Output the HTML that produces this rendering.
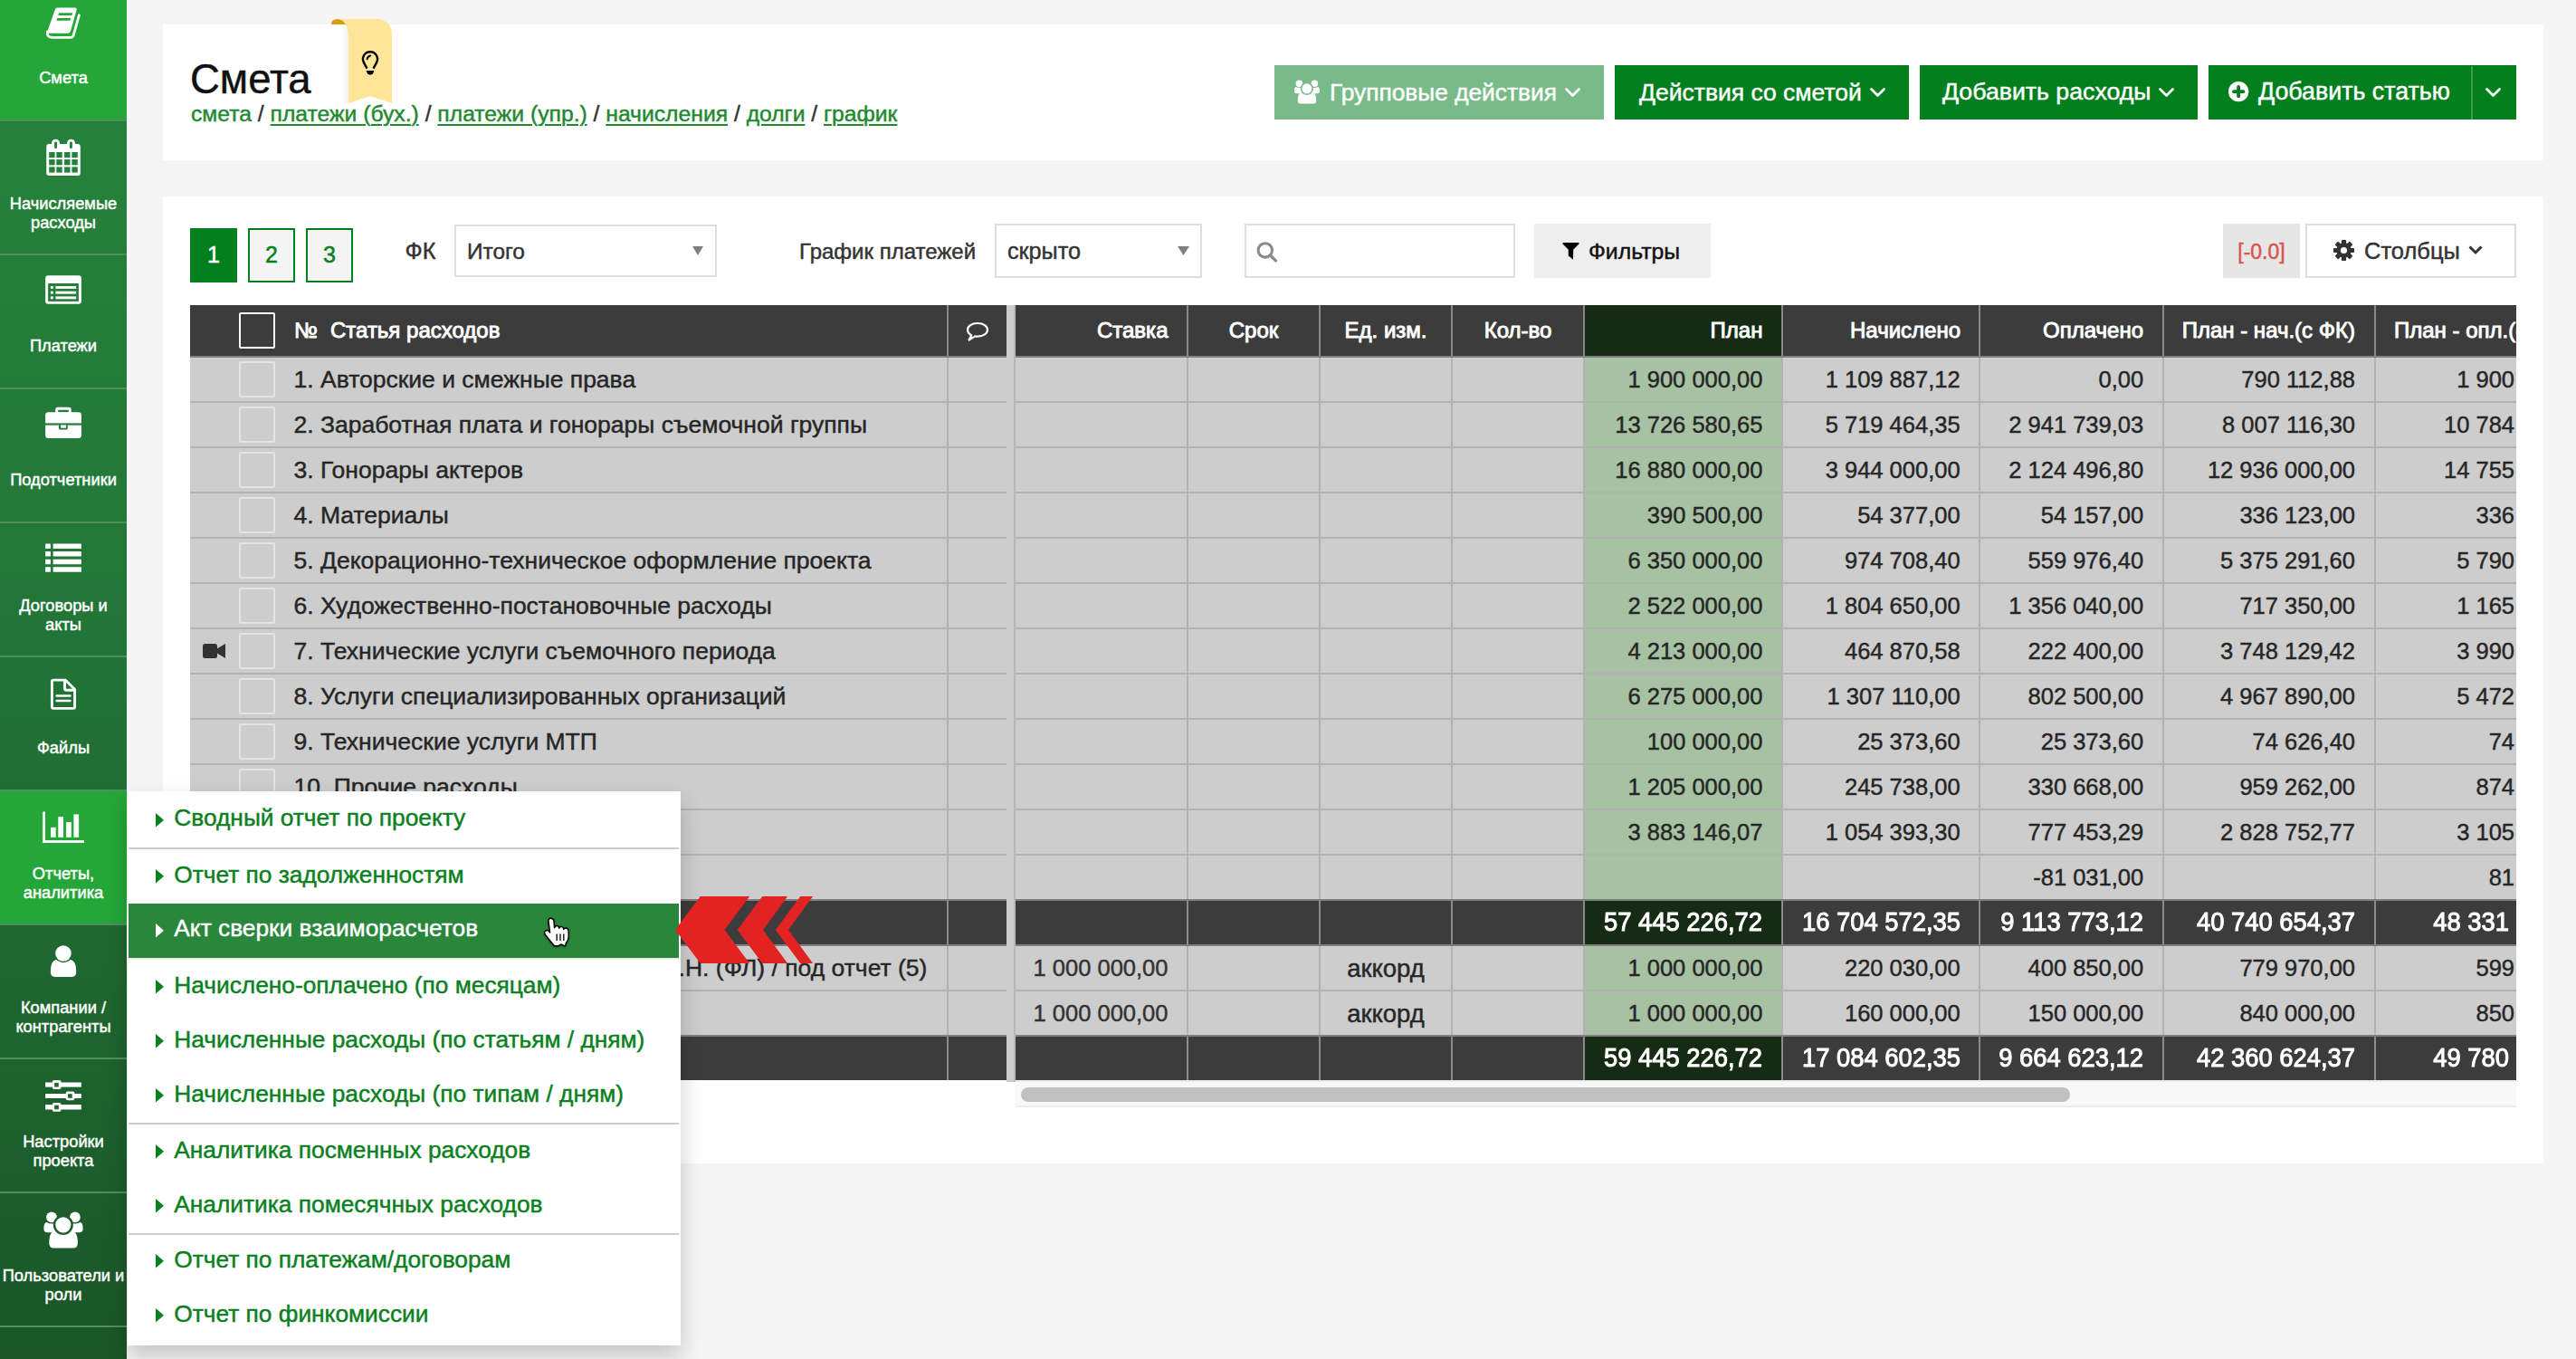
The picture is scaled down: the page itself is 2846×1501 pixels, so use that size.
<!DOCTYPE html><html><head><meta charset="utf-8"><style>
html,body{margin:0;padding:0;width:2846px;height:1501px;overflow:hidden;}
#root{position:relative;width:2846px;height:1501px;overflow:hidden;background:#f5f5f5;}
body{width:2846px;height:1501px;overflow:hidden;position:relative;background:#f5f5f5;font-family:"Liberation Sans", sans-serif;}
.t{position:absolute;white-space:nowrap;-webkit-text-stroke-width:0.45px;}
.r{position:absolute;}
svg{position:absolute;overflow:visible;}
</style></head><body><div id="root">
<div class="r" style="left:0px;top:0px;width:140px;height:1501px;background:linear-gradient(#26843b 0px, #237838 600px, #1f6a31 1000px, #1a5628 1501px);"></div>
<div class="r" style="left:0px;top:0px;width:140px;height:132px;background:#24a738;"></div>
<div class="r" style="left:0px;top:132px;width:140px;height:2px;background:#4e905d;"></div>
<div class="r" style="left:0px;top:280px;width:140px;height:2px;background:#4e905d;"></div>
<div class="r" style="left:0px;top:428px;width:140px;height:2px;background:#4e905d;"></div>
<div class="r" style="left:0px;top:576px;width:140px;height:2px;background:#4e905d;"></div>
<div class="r" style="left:0px;top:724px;width:140px;height:2px;background:#4e905d;"></div>
<div class="r" style="left:0px;top:872px;width:140px;height:2px;background:#4e905d;"></div>
<div class="r" style="left:0px;top:874px;width:140px;height:146px;background:#24a738;"></div>
<div class="r" style="left:0px;top:1020px;width:140px;height:2px;background:#4e905d;"></div>
<div class="r" style="left:0px;top:1168px;width:140px;height:2px;background:#4e905d;"></div>
<div class="r" style="left:0px;top:1316px;width:140px;height:2px;background:#4e905d;"></div>
<div class="r" style="left:0px;top:1464px;width:140px;height:2px;background:#4e905d;"></div>
<div class="t" style="left:-530.0px;width:1200px;text-align:center;top:76.5px;font-size:18.3px;line-height:18.3px;color:#fff;font-weight:400;">Смета</div>
<div class="t" style="left:-530.0px;width:1200px;text-align:center;top:215.5px;font-size:18.3px;line-height:18.3px;color:#fff;font-weight:400;">Начисляемые</div>
<div class="t" style="left:-530.0px;width:1200px;text-align:center;top:236.5px;font-size:18.3px;line-height:18.3px;color:#fff;font-weight:400;">расходы</div>
<div class="t" style="left:-530.0px;width:1200px;text-align:center;top:372.5px;font-size:18.3px;line-height:18.3px;color:#fff;font-weight:400;">Платежи</div>
<div class="t" style="left:-530.0px;width:1200px;text-align:center;top:520.5px;font-size:18.3px;line-height:18.3px;color:#fff;font-weight:400;">Подотчетники</div>
<div class="t" style="left:-530.0px;width:1200px;text-align:center;top:659.5px;font-size:18.3px;line-height:18.3px;color:#fff;font-weight:400;">Договоры и</div>
<div class="t" style="left:-530.0px;width:1200px;text-align:center;top:680.5px;font-size:18.3px;line-height:18.3px;color:#fff;font-weight:400;">акты</div>
<div class="t" style="left:-530.0px;width:1200px;text-align:center;top:816.5px;font-size:18.3px;line-height:18.3px;color:#fff;font-weight:400;">Файлы</div>
<div class="t" style="left:-530.0px;width:1200px;text-align:center;top:955.5px;font-size:18.3px;line-height:18.3px;color:#fff;font-weight:400;">Отчеты,</div>
<div class="t" style="left:-530.0px;width:1200px;text-align:center;top:976.5px;font-size:18.3px;line-height:18.3px;color:#fff;font-weight:400;">аналитика</div>
<div class="t" style="left:-530.0px;width:1200px;text-align:center;top:1103.5px;font-size:18.3px;line-height:18.3px;color:#fff;font-weight:400;">Компании /</div>
<div class="t" style="left:-530.0px;width:1200px;text-align:center;top:1124.5px;font-size:18.3px;line-height:18.3px;color:#fff;font-weight:400;">контрагенты</div>
<div class="t" style="left:-530.0px;width:1200px;text-align:center;top:1251.5px;font-size:18.3px;line-height:18.3px;color:#fff;font-weight:400;">Настройки</div>
<div class="t" style="left:-530.0px;width:1200px;text-align:center;top:1272.5px;font-size:18.3px;line-height:18.3px;color:#fff;font-weight:400;">проекта</div>
<div class="t" style="left:-530.0px;width:1200px;text-align:center;top:1399.5px;font-size:18.3px;line-height:18.3px;color:#fff;font-weight:400;">Пользователи и</div>
<div class="t" style="left:-530.0px;width:1200px;text-align:center;top:1420.5px;font-size:18.3px;line-height:18.3px;color:#fff;font-weight:400;">роли</div>
<svg style="left:0;top:0" width="140" height="1501" viewBox="0 0 140 1501"><g transform="translate(45,0)">
<path d="M18.2,8.6 L37.8,8.6 Q40.2,8.6 39.6,11 L33,34.6 Q32.4,36.8 30.2,36.8 L9.2,36.8 Q6.8,36.8 7.4,34.4 L15.8,10.6 Q16.4,8.6 18.2,8.6 Z" fill="#fff"/>
<polygon points="20.2,14.2 35.2,14.2 34.4,16.9 19.4,16.9" fill="#24a738"/>
<polygon points="18.2,20 33.2,20 32.4,22.8 17.4,22.8" fill="#24a738"/>
<path d="M7.4,35 Q6.2,41.2 12.4,41.3 L33,41.3 Q35.6,41.3 36.3,38.6 L42.4,16.8" fill="none" stroke="#fff" stroke-width="2.8" stroke-linecap="round"/>
</g>
<g transform="translate(45,150)">
<rect x="6.25" y="9" width="37.55" height="35" rx="3" fill="#fff"/>
<rect x="12" y="3.7" width="9" height="12" rx="4.5" fill="#fff"/>
<rect x="29" y="3.7" width="9" height="12" rx="4.5" fill="#fff"/>
<rect x="15.1" y="6.6" width="2.9" height="7.6" rx="1.4" fill="#25803a"/>
<rect x="32" y="6.6" width="2.9" height="7.6" rx="1.4" fill="#25803a"/>
<rect x="9.2" y="18" width="6.4" height="6.2" fill="#25803a"/><rect x="9.2" y="26.1" width="6.4" height="6.2" fill="#25803a"/><rect x="9.2" y="34.4" width="6.4" height="6.2" fill="#25803a"/><rect x="17.3" y="18" width="6.4" height="6.2" fill="#25803a"/><rect x="17.3" y="26.1" width="6.4" height="6.2" fill="#25803a"/><rect x="17.3" y="34.4" width="6.4" height="6.2" fill="#25803a"/><rect x="26.1" y="18" width="6.4" height="6.2" fill="#25803a"/><rect x="26.1" y="26.1" width="6.4" height="6.2" fill="#25803a"/><rect x="26.1" y="34.4" width="6.4" height="6.2" fill="#25803a"/><rect x="34.4" y="18" width="6.4" height="6.2" fill="#25803a"/><rect x="34.4" y="26.1" width="6.4" height="6.2" fill="#25803a"/><rect x="34.4" y="34.4" width="6.4" height="6.2" fill="#25803a"/></g>
<g transform="translate(45,295)">
<rect x="5.15" y="9.2" width="39.75" height="31.6" rx="3.2" fill="#fff"/>
<rect x="8.1" y="18" width="33.8" height="19.9" fill="#247e39"/>
<rect x="10.9" y="21" width="2.9" height="2.9" fill="#fff"/><rect x="16.4" y="21" width="22.8" height="2.9" fill="#fff"/><rect x="10.9" y="26.7" width="2.9" height="2.9" fill="#fff"/><rect x="16.4" y="26.7" width="22.8" height="2.9" fill="#fff"/><rect x="10.9" y="32.4" width="2.9" height="2.9" fill="#fff"/><rect x="16.4" y="32.4" width="22.8" height="2.9" fill="#fff"/></g>
<g transform="translate(45,442)">
<rect x="16.2" y="7.7" width="17.5" height="8" rx="2.5" fill="#fff"/>
<rect x="19.1" y="10.7" width="11.8" height="2.7" rx="0.8" fill="#247b38"/>
<rect x="5.15" y="13.2" width="39.75" height="28.7" rx="3.2" fill="#fff"/>
<rect x="5" y="25.4" width="40" height="2.2" fill="#247b38"/>
<rect x="20" y="26.5" width="9.8" height="6.1" rx="1.5" fill="#247b38"/>
<rect x="22" y="27.4" width="6" height="3.3" fill="#fff"/>
</g>
<g transform="translate(45,592)"><rect x="5.15" y="8.6" width="5.75" height="5.5" rx="0.5" fill="#fff"/><rect x="13.6" y="8.6" width="31.3" height="5.5" rx="0.5" fill="#fff"/><rect x="5.15" y="17.1" width="5.75" height="5.5" rx="0.5" fill="#fff"/><rect x="13.6" y="17.1" width="31.3" height="5.5" rx="0.5" fill="#fff"/><rect x="5.15" y="25.8" width="5.75" height="5.5" rx="0.5" fill="#fff"/><rect x="13.6" y="25.8" width="31.3" height="5.5" rx="0.5" fill="#fff"/><rect x="5.15" y="34.2" width="5.75" height="5.5" rx="0.5" fill="#fff"/><rect x="13.6" y="34.2" width="31.3" height="5.5" rx="0.5" fill="#fff"/></g>
<g transform="translate(45,742)">
<path d="M27.2,9.1 L14,9.1 Q12.4,9.1 12.4,10.7 L12.4,38.8 Q12.4,40.4 14,40.4 L36,40.4 Q37.6,40.4 37.6,38.8 L37.6,19.6 Z" fill="none" stroke="#fff" stroke-width="2.9" stroke-linejoin="round"/>
<path d="M26.5,9.1 L26.5,18.6 Q26.5,20.2 28.1,20.2 L37.6,20.2" fill="none" stroke="#fff" stroke-width="2.9"/>
<line x1="17.7" y1="26.5" x2="32.4" y2="26.5" stroke="#fff" stroke-width="2.6" stroke-linecap="round"/>
<line x1="17.7" y1="32" x2="32.4" y2="32" stroke="#fff" stroke-width="2.6" stroke-linecap="round"/>
</g>
<g transform="translate(42,888)">
<rect x="5.15" y="8.5" width="2.75" height="34.4" fill="#fff"/>
<rect x="5.15" y="40.1" width="45.85" height="2.8" fill="#fff"/>
<rect x="14" y="25.8" width="5.7" height="11" fill="#fff"/>
<rect x="22.3" y="14.2" width="5.7" height="22.6" fill="#fff"/>
<rect x="31.1" y="20" width="5.7" height="16.8" fill="#fff"/>
<rect x="39.4" y="11.4" width="5.7" height="25.4" fill="#fff"/>
</g>
<g transform="translate(45,1036)">
<path d="M10.9,37.5 Q10.9,24 18,23.9 Q21.5,26.8 24.95,26.8 Q28.5,26.8 32,23.9 Q39.2,24 39.2,37.5 Q39.2,42.9 34.5,42.9 L15.6,42.9 Q10.9,42.9 10.9,37.5 Z" fill="#fff"/>
<circle cx="24.95" cy="17.05" r="10.2" fill="#206a31"/>
<circle cx="24.95" cy="17.05" r="8.75" fill="#fff"/>
</g>
<g transform="translate(44,1185)"><rect x="6.1" y="10.5" width="39.7" height="5.1" fill="#fff"/><rect x="13.8" y="8.1" width="9.7" height="9.9" rx="2" fill="#fff"/><rect x="16.2" y="10.9" width="4.6" height="4.6" fill="#1f652f"/><rect x="6.1" y="23" width="39.7" height="5" fill="#fff"/><rect x="28.7" y="20.4" width="9.7" height="9.9" rx="2" fill="#fff"/><rect x="31.1" y="23.2" width="4.6" height="4.6" fill="#1f652f"/><rect x="6.1" y="35.1" width="39.7" height="5.399999999999999" fill="#fff"/><rect x="13.8" y="32.9" width="9.7" height="9.9" rx="2" fill="#fff"/><rect x="16.2" y="35.7" width="4.6" height="4.6" fill="#1f652f"/></g>
<g transform="translate(44,1333)">
<circle cx="13" cy="11.4" r="5.9" fill="#fff"/>
<circle cx="38.9" cy="11.4" r="5.85" fill="#fff"/>
<path d="M4.4,24 Q4.4,16.9 7.5,16.9 Q10.5,18.6 13,18.6 Q15.5,18.6 18,17.5 L18,28.3 L8.4,28.3 Q4.4,28.3 4.4,24 Z" fill="#fff"/>
<path d="M47.6,24 Q47.6,16.9 44.5,16.9 Q41.5,18.6 38.9,18.6 Q36.4,18.6 34,17.5 L34,28.3 L43.6,28.3 Q47.6,28.3 47.6,24 Z" fill="#fff"/>
<circle cx="25.85" cy="19.9" r="10.2" fill="#1c5e2c"/>
<path d="M10.3,40 Q10.3,26.5 17.5,26.3 Q21.5,29.5 25.85,29.5 Q30.2,29.5 34.2,26.3 Q41.9,26.5 41.9,40 Q41.9,45.6 36.5,45.6 L15.7,45.6 Q10.3,45.6 10.3,40 Z" fill="#fff"/>
<circle cx="25.85" cy="19.9" r="10.2" fill="none" stroke="#1c5e2c" stroke-width="1.6"/>
<circle cx="25.85" cy="19.9" r="8.55" fill="#fff"/>
</g></svg>
<div class="r" style="left:180px;top:27px;width:2630px;height:150px;background:#fff;"></div>
<div class="t" style="left:210.0px;top:64.5px;font-size:45.5px;line-height:45.5px;color:#111;font-weight:400;">Смета</div>
<div class="t" style="left:211.0px;top:113.6px;font-size:24.7px;line-height:24.7px;color:#22892f;font-weight:400;"><span style="color:#22892f">смета</span><span style="color:#333"> / </span><span style="color:#22892f;text-decoration:underline;text-decoration-thickness:1.5px;text-underline-offset:3px;">платежи (бух.)</span><span style="color:#333"> / </span><span style="color:#22892f;text-decoration:underline;text-decoration-thickness:1.5px;text-underline-offset:3px;">платежи (упр.)</span><span style="color:#333"> / </span><span style="color:#22892f;text-decoration:underline;text-decoration-thickness:1.5px;text-underline-offset:3px;">начисления</span><span style="color:#333"> / </span><span style="color:#22892f;text-decoration:underline;text-decoration-thickness:1.5px;text-underline-offset:3px;">долги</span><span style="color:#333"> / </span><span style="color:#22892f;text-decoration:underline;text-decoration-thickness:1.5px;text-underline-offset:3px;">график</span></div>
<svg style="left:0;top:0" width="2846" height="200" viewBox="0 0 2846 200">
<path d="M366,27 C366,22.5 369.5,21 374,21 L378,21 C382,21 384,24 384,27 Z" fill="#dc9c12"/>
<rect x="377" y="27" width="8" height="87" fill="url(#ribsh)"/>
<defs><linearGradient id="ribsh" x1="0" x2="1" y1="0" y2="0"><stop offset="0" stop-color="#000" stop-opacity="0"/><stop offset="1" stop-color="#000" stop-opacity="0.05"/></linearGradient></defs>
<path d="M372,21 L417,21 A16,16 0 0 1 433,37 L433,114 L408.7,106.3 L385,114 L385,42 C385,30 381,21 372,21 Z" fill="#ffe597"/>
<path d="M405.5,75.6 L401.97,69.12 A8,8 0 1 1 416.03,69.12 L412.5,75.6" fill="none" stroke="#000" stroke-width="2.4"/>
<path d="M405.6,65.3 A4.6,4.6 0 0 1 409.3,61.5" fill="none" stroke="#000" stroke-width="1.9" stroke-linecap="round"/>
<path d="M404.9,78.1 L413.1,78.1 A4.1,4.6 0 0 1 404.9,78.1 Z" fill="#000"/>
</svg>
<div class="r" style="left:1408px;top:72px;width:364px;height:60px;background:#79bb88;"></div>
<svg style="left:0;top:0" width="2846" height="200" viewBox="0 0 2846 200"><g transform="translate(1427.04,84.9) scale(0.65)">
<circle cx="13" cy="11.4" r="5.9" fill="#fff"/>
<circle cx="38.9" cy="11.4" r="5.85" fill="#fff"/>
<path d="M4.4,24 Q4.4,16.9 7.5,16.9 Q10.5,18.6 13,18.6 Q15.5,18.6 18,17.5 L18,28.3 L8.4,28.3 Q4.4,28.3 4.4,24 Z" fill="#fff"/>
<path d="M47.6,24 Q47.6,16.9 44.5,16.9 Q41.5,18.6 38.9,18.6 Q36.4,18.6 34,17.5 L34,28.3 L43.6,28.3 Q47.6,28.3 47.6,24 Z" fill="#fff"/>
<circle cx="25.85" cy="19.9" r="10.2" fill="#79bb88"/>
<path d="M10.3,40 Q10.3,26.5 17.5,26.3 Q21.5,29.5 25.85,29.5 Q30.2,29.5 34.2,26.3 Q41.9,26.5 41.9,40 Q41.9,45.6 36.5,45.6 L15.7,45.6 Q10.3,45.6 10.3,40 Z" fill="#fff"/>
<circle cx="25.85" cy="19.9" r="10.2" fill="none" stroke="#79bb88" stroke-width="1.6"/>
<circle cx="25.85" cy="19.9" r="8.55" fill="#fff"/>
</g></svg>
<div class="t" style="left:1469.0px;top:88.6px;font-size:26.3px;line-height:26.3px;color:#fff;font-weight:400;">Групповые действия</div>
<svg style="left:1729px;top:96.5px;" width="17" height="10" viewBox="0 0 17 10"><polyline points="1.5,1.5 8.5,8.5 15.5,1.5" fill="none" stroke="#fff" stroke-width="2.8" stroke-linecap="round" stroke-linejoin="round"/></svg>
<div class="r" style="left:1784px;top:72px;width:325px;height:60px;background:#037f1e;"></div>
<div class="t" style="left:1811.0px;top:88.5px;font-size:26.5px;line-height:26.5px;color:#fff;font-weight:400;">Действия со сметой</div>
<svg style="left:2066px;top:96.5px;" width="17" height="10" viewBox="0 0 17 10"><polyline points="1.5,1.5 8.5,8.5 15.5,1.5" fill="none" stroke="#fff" stroke-width="2.8" stroke-linecap="round" stroke-linejoin="round"/></svg>
<div class="r" style="left:2121px;top:72px;width:307px;height:60px;background:#037f1e;"></div>
<div class="t" style="left:2146.0px;top:88.3px;font-size:26.7px;line-height:26.7px;color:#fff;font-weight:400;">Добавить расходы</div>
<svg style="left:2385px;top:96.5px;" width="17" height="10" viewBox="0 0 17 10"><polyline points="1.5,1.5 8.5,8.5 15.5,1.5" fill="none" stroke="#fff" stroke-width="2.8" stroke-linecap="round" stroke-linejoin="round"/></svg>
<div class="r" style="left:2440px;top:72px;width:340px;height:60px;background:#037f1e;"></div>
<div class="r" style="left:2730px;top:73px;width:2px;height:59px;background:#409c51;"></div>
<svg style="left:2461.6px;top:90.4px;" width="22.3" height="22.3" viewBox="0 0 22.3 22.3"><circle cx="11.15" cy="11.15" r="11.15" fill="#fff"/><line x1="11.15" y1="5.95" x2="11.15" y2="16.35" stroke="#037f1e" stroke-width="3.8" stroke-linecap="round"/><line x1="5.95" y1="11.15" x2="16.35" y2="11.15" stroke="#037f1e" stroke-width="3.8" stroke-linecap="round"/></svg>
<div class="t" style="left:2495.0px;top:88.2px;font-size:26.8px;line-height:26.8px;color:#fff;font-weight:400;">Добавить статью</div>
<svg style="left:2746px;top:96.5px;" width="17" height="10" viewBox="0 0 17 10"><polyline points="1.5,1.5 8.5,8.5 15.5,1.5" fill="none" stroke="#fff" stroke-width="2.8" stroke-linecap="round" stroke-linejoin="round"/></svg>
<div class="r" style="left:180px;top:217px;width:2630px;height:1068px;background:#fff;"></div>
<div class="r" style="left:210px;top:252px;width:52px;height:60px;background:#037f1e;"></div>
<div class="t" style="left:-364.0px;width:1200px;text-align:center;top:268.8px;font-size:25px;line-height:25px;color:#fff;font-weight:400;">1</div>
<div class="r" style="left:274px;top:252px;width:52px;height:60px;background:#f4f4f4;box-sizing:border-box;border:2px solid #037f1e;"></div>
<div class="t" style="left:-300.0px;width:1200px;text-align:center;top:268.8px;font-size:25px;line-height:25px;color:#037f1e;font-weight:400;">2</div>
<div class="r" style="left:338px;top:252px;width:52px;height:60px;background:#f4f4f4;box-sizing:border-box;border:2px solid #037f1e;"></div>
<div class="t" style="left:-236.0px;width:1200px;text-align:center;top:268.8px;font-size:25px;line-height:25px;color:#037f1e;font-weight:400;">3</div>
<div class="t" style="left:447.5px;top:265.1px;font-size:25.3px;line-height:25.3px;color:#333;font-weight:400;">ФК</div>
<div class="r" style="left:502px;top:248px;width:290px;height:58px;background:#fff;box-sizing:border-box;border:2px solid #dedede;"></div>
<div class="t" style="left:516.0px;top:265.8px;font-size:24.4px;line-height:24.4px;color:#333;font-weight:400;">Итого</div>
<svg style="left:765px;top:272px;" width="12" height="10" viewBox="0 0 12 10"><polygon points="0,0 12,0 6.0,10" fill="#808080"/></svg>
<div class="t" style="left:883.0px;top:266.2px;font-size:24px;line-height:24px;color:#333;font-weight:400;">График платежей</div>
<div class="r" style="left:1099px;top:247px;width:229px;height:60px;background:#fff;box-sizing:border-box;border:2px solid #dedede;"></div>
<div class="t" style="left:1113.0px;top:265.2px;font-size:25.2px;line-height:25.2px;color:#333;font-weight:400;">скрыто</div>
<svg style="left:1301px;top:272px;" width="13" height="10" viewBox="0 0 13 10"><polygon points="0,0 13,0 6.5,10" fill="#808080"/></svg>
<div class="r" style="left:1375px;top:247px;width:299px;height:60px;background:#fff;box-sizing:border-box;border:2px solid #dedede;"></div>
<svg style="left:1388px;top:266px;" width="24" height="24" viewBox="0 0 24 24"><circle cx="9.8" cy="10.4" r="7.7" fill="none" stroke="#8a8a8a" stroke-width="3.1"/><line x1="15.6" y1="16.2" x2="21.4" y2="21.9" stroke="#8a8a8a" stroke-width="3.4" stroke-linecap="round"/></svg>
<div class="r" style="left:1695px;top:247px;width:195px;height:60px;background:#eeeeee;"></div>
<svg style="left:1726.4px;top:267.9px;" width="19" height="19" viewBox="0 0 19 19"><path d="M1,0 L18,0 Q19.2,0.3 18.4,1.4 L12.2,7.7 L12,18.8 L6.8,14.6 L6.8,7.7 L0.6,1.4 Q-0.2,0.3 1,0 Z" fill="#000"/></svg>
<div class="t" style="left:1755.0px;top:265.5px;font-size:24.8px;line-height:24.8px;color:#111;font-weight:400;">Фильтры</div>
<div class="r" style="left:2456px;top:247px;width:85px;height:60px;background:#e6e6e6;"></div>
<div class="t" style="left:1898.5px;width:1200px;text-align:center;top:267.3px;font-size:23px;line-height:23px;color:#d9534f;font-weight:400;">[-0.0]</div>
<div class="r" style="left:2547px;top:247px;width:233px;height:60px;background:#fff;box-sizing:border-box;border:2px solid #dedede;"></div>
<svg style="left:2578px;top:265.3px;" width="23" height="23" viewBox="0 0 23 23"><g fill="#333" transform="translate(11.5,11.5)"><rect x="-2.6" y="-11.5" width="5.2" height="6" rx="0.8" transform="rotate(0)"/><rect x="-2.6" y="-11.5" width="5.2" height="6" rx="0.8" transform="rotate(45)"/><rect x="-2.6" y="-11.5" width="5.2" height="6" rx="0.8" transform="rotate(90)"/><rect x="-2.6" y="-11.5" width="5.2" height="6" rx="0.8" transform="rotate(135)"/><rect x="-2.6" y="-11.5" width="5.2" height="6" rx="0.8" transform="rotate(180)"/><rect x="-2.6" y="-11.5" width="5.2" height="6" rx="0.8" transform="rotate(225)"/><rect x="-2.6" y="-11.5" width="5.2" height="6" rx="0.8" transform="rotate(270)"/><rect x="-2.6" y="-11.5" width="5.2" height="6" rx="0.8" transform="rotate(315)"/><circle r="8.2"/></g><circle cx="11.5" cy="11.5" r="3.6" fill="#fff"/></svg>
<div class="t" style="left:2612.0px;top:264.9px;font-size:25.5px;line-height:25.5px;color:#333;font-weight:400;">Столбцы</div>
<svg style="left:2727px;top:271px;" width="16" height="10" viewBox="0 0 16 10"><polyline points="1.5,1.5 8,8 14.5,1.5" fill="none" stroke="#333" stroke-width="3"/></svg>
<div class="r" style="left:1112px;top:337px;width:8px;height:858px;background:#cccccc;"></div>
<div class="r" style="left:1120px;top:337px;width:2px;height:858px;background:#b8b8b8;"></div>
<div class="r" style="left:210px;top:337px;width:902px;height:56px;background:#3c3c3c;"></div>
<div class="r" style="left:210px;top:393px;width:902px;height:2px;background:#808080;"></div>
<div class="r" style="left:1122px;top:337px;width:1658px;height:56px;background:#3c3c3c;"></div>
<div class="r" style="left:1749px;top:337px;width:219px;height:56px;background:#152b13;"></div>
<div class="r" style="left:1122px;top:393px;width:1658px;height:2px;background:#808080;"></div>
<div class="r" style="left:264px;top:345px;width:40px;height:40px;box-sizing:border-box;border:2px solid #fff;border-radius:2px;"></div>
<div class="t" style="left:325.0px;top:352.7px;font-size:24px;line-height:24px;color:#fff;font-weight:400;-webkit-text-stroke-width:0.9px;">№</div>
<div class="t" style="left:365.0px;top:352.7px;font-size:24px;line-height:24px;color:#fff;font-weight:400;-webkit-text-stroke-width:0.9px;">Статья расходов</div>
<div class="r" style="left:1046px;top:337px;width:2px;height:56px;background:#888888;"></div>
<svg style="left:1066px;top:354px;" width="28" height="25" viewBox="0 0 28 25"><path d="M14,3 C20.5,3 25,6.3 25,10.3 C25,14.3 20.5,17.6 14,17.6 C13,17.6 12.2,17.5 11.3,17.4 L4.5,21.5 L7.2,16.2 C4.6,14.9 3,12.7 3,10.3 C3,6.3 7.5,3 14,3 Z" fill="none" stroke="#fff" stroke-width="2.2" stroke-linejoin="round"/></svg>
<div class="r" style="left:1311px;top:337px;width:2px;height:56px;background:#888888;"></div>
<div class="r" style="left:1457px;top:337px;width:2px;height:56px;background:#888888;"></div>
<div class="r" style="left:1603px;top:337px;width:2px;height:56px;background:#888888;"></div>
<div class="r" style="left:1749px;top:337px;width:2px;height:56px;background:#888888;"></div>
<div class="r" style="left:1968px;top:337px;width:2px;height:56px;background:#888888;"></div>
<div class="r" style="left:2186px;top:337px;width:2px;height:56px;background:#888888;"></div>
<div class="r" style="left:2389px;top:337px;width:2px;height:56px;background:#888888;"></div>
<div class="r" style="left:2623px;top:337px;width:2px;height:56px;background:#888888;"></div>
<div class="t" style="left:90.5px;width:1200px;text-align:right;top:352.7px;font-size:24px;line-height:24px;color:#fff;font-weight:400;-webkit-text-stroke-width:0.9px;">Ставка</div>
<div class="t" style="left:785.0px;width:1200px;text-align:center;top:352.7px;font-size:24px;line-height:24px;color:#fff;font-weight:400;-webkit-text-stroke-width:0.9px;">Срок</div>
<div class="t" style="left:931.0px;width:1200px;text-align:center;top:352.7px;font-size:24px;line-height:24px;color:#fff;font-weight:400;-webkit-text-stroke-width:0.9px;">Ед. изм.</div>
<div class="t" style="left:1077.0px;width:1200px;text-align:center;top:352.7px;font-size:24px;line-height:24px;color:#fff;font-weight:400;-webkit-text-stroke-width:0.9px;">Кол-во</div>
<div class="t" style="left:747.4px;width:1200px;text-align:right;top:352.7px;font-size:24px;line-height:24px;color:#fff;font-weight:400;-webkit-text-stroke-width:0.9px;">План</div>
<div class="t" style="left:966.0px;width:1200px;text-align:right;top:352.7px;font-size:24px;line-height:24px;color:#fff;font-weight:400;-webkit-text-stroke-width:0.9px;">Начислено</div>
<div class="t" style="left:1168.0px;width:1200px;text-align:right;top:352.7px;font-size:24px;line-height:24px;color:#fff;font-weight:400;-webkit-text-stroke-width:0.9px;">Оплачено</div>
<div class="t" style="left:1402.0px;width:1200px;text-align:right;top:352.7px;font-size:24px;line-height:24px;color:#fff;font-weight:400;-webkit-text-stroke-width:0.9px;">План - нач.(с ФК)</div>
<div class="r" style="left:2625px;top:337px;width:155px;height:56px;overflow:hidden;"><div class="t" style="left:20.0px;top:15.7px;font-size:24px;line-height:24px;color:#fff;font-weight:400;-webkit-text-stroke-width:0.9px;">План - опл.(с ФК)</div>
</div>
<div class="r" style="left:210px;top:395px;width:902px;height:48px;background:#cdcdcd;"></div>
<div class="r" style="left:1122px;top:395px;width:1658px;height:48px;background:#cdcdcd;"></div>
<div class="r" style="left:1749px;top:395px;width:219px;height:48px;background:#a7c2a3;"></div>
<div class="r" style="left:210px;top:443px;width:902px;height:2px;background:#b3b2b3;"></div>
<div class="r" style="left:1122px;top:443px;width:1658px;height:2px;background:#b3b2b3;"></div>
<div class="r" style="left:1046px;top:395px;width:2px;height:48px;background:#b3b2b3;"></div>
<div class="r" style="left:1311px;top:395px;width:2px;height:48px;background:#b3b2b3;"></div>
<div class="r" style="left:1457px;top:395px;width:2px;height:48px;background:#b3b2b3;"></div>
<div class="r" style="left:1603px;top:395px;width:2px;height:48px;background:#b3b2b3;"></div>
<div class="r" style="left:1749px;top:395px;width:2px;height:48px;background:#b3b2b3;"></div>
<div class="r" style="left:1968px;top:395px;width:2px;height:48px;background:#b3b2b3;"></div>
<div class="r" style="left:2186px;top:395px;width:2px;height:48px;background:#b3b2b3;"></div>
<div class="r" style="left:2389px;top:395px;width:2px;height:48px;background:#b3b2b3;"></div>
<div class="r" style="left:2623px;top:395px;width:2px;height:48px;background:#b3b2b3;"></div>
<div class="r" style="left:264px;top:399px;width:40px;height:40px;box-sizing:border-box;border:2px solid #e4e4e4;border-radius:2px;"></div>
<div class="t" style="left:324.5px;top:406.4px;font-size:26.5px;line-height:26.5px;color:#262626;font-weight:400;">1. Авторские и смежные права</div>
<div class="t" style="left:747.4px;width:1200px;text-align:right;top:407.2px;font-size:25.5px;line-height:25.5px;color:#262626;font-weight:400;">1 900 000,00</div>
<div class="t" style="left:965.6px;width:1200px;text-align:right;top:407.2px;font-size:25.5px;line-height:25.5px;color:#262626;font-weight:400;">1 109 887,12</div>
<div class="t" style="left:1168.2px;width:1200px;text-align:right;top:407.2px;font-size:25.5px;line-height:25.5px;color:#262626;font-weight:400;">0,00</div>
<div class="t" style="left:1402.0px;width:1200px;text-align:right;top:407.2px;font-size:25.5px;line-height:25.5px;color:#262626;font-weight:400;">790 112,88</div>
<div class="t" style="left:1578.0px;width:1200px;text-align:right;top:407.2px;font-size:25.5px;line-height:25.5px;color:#262626;font-weight:400;">1 900</div>
<div class="r" style="left:210px;top:445px;width:902px;height:48px;background:#cdcdcd;"></div>
<div class="r" style="left:1122px;top:445px;width:1658px;height:48px;background:#cdcdcd;"></div>
<div class="r" style="left:1749px;top:445px;width:219px;height:48px;background:#a7c2a3;"></div>
<div class="r" style="left:210px;top:493px;width:902px;height:2px;background:#b3b2b3;"></div>
<div class="r" style="left:1122px;top:493px;width:1658px;height:2px;background:#b3b2b3;"></div>
<div class="r" style="left:1046px;top:445px;width:2px;height:48px;background:#b3b2b3;"></div>
<div class="r" style="left:1311px;top:445px;width:2px;height:48px;background:#b3b2b3;"></div>
<div class="r" style="left:1457px;top:445px;width:2px;height:48px;background:#b3b2b3;"></div>
<div class="r" style="left:1603px;top:445px;width:2px;height:48px;background:#b3b2b3;"></div>
<div class="r" style="left:1749px;top:445px;width:2px;height:48px;background:#b3b2b3;"></div>
<div class="r" style="left:1968px;top:445px;width:2px;height:48px;background:#b3b2b3;"></div>
<div class="r" style="left:2186px;top:445px;width:2px;height:48px;background:#b3b2b3;"></div>
<div class="r" style="left:2389px;top:445px;width:2px;height:48px;background:#b3b2b3;"></div>
<div class="r" style="left:2623px;top:445px;width:2px;height:48px;background:#b3b2b3;"></div>
<div class="r" style="left:264px;top:449px;width:40px;height:40px;box-sizing:border-box;border:2px solid #e4e4e4;border-radius:2px;"></div>
<div class="t" style="left:324.5px;top:456.4px;font-size:26.5px;line-height:26.5px;color:#262626;font-weight:400;">2. Заработная плата и гонорары съемочной группы</div>
<div class="t" style="left:747.4px;width:1200px;text-align:right;top:457.2px;font-size:25.5px;line-height:25.5px;color:#262626;font-weight:400;">13 726 580,65</div>
<div class="t" style="left:965.6px;width:1200px;text-align:right;top:457.2px;font-size:25.5px;line-height:25.5px;color:#262626;font-weight:400;">5 719 464,35</div>
<div class="t" style="left:1168.2px;width:1200px;text-align:right;top:457.2px;font-size:25.5px;line-height:25.5px;color:#262626;font-weight:400;">2 941 739,03</div>
<div class="t" style="left:1402.0px;width:1200px;text-align:right;top:457.2px;font-size:25.5px;line-height:25.5px;color:#262626;font-weight:400;">8 007 116,30</div>
<div class="t" style="left:1578.0px;width:1200px;text-align:right;top:457.2px;font-size:25.5px;line-height:25.5px;color:#262626;font-weight:400;">10 784</div>
<div class="r" style="left:210px;top:495px;width:902px;height:48px;background:#cdcdcd;"></div>
<div class="r" style="left:1122px;top:495px;width:1658px;height:48px;background:#cdcdcd;"></div>
<div class="r" style="left:1749px;top:495px;width:219px;height:48px;background:#a7c2a3;"></div>
<div class="r" style="left:210px;top:543px;width:902px;height:2px;background:#b3b2b3;"></div>
<div class="r" style="left:1122px;top:543px;width:1658px;height:2px;background:#b3b2b3;"></div>
<div class="r" style="left:1046px;top:495px;width:2px;height:48px;background:#b3b2b3;"></div>
<div class="r" style="left:1311px;top:495px;width:2px;height:48px;background:#b3b2b3;"></div>
<div class="r" style="left:1457px;top:495px;width:2px;height:48px;background:#b3b2b3;"></div>
<div class="r" style="left:1603px;top:495px;width:2px;height:48px;background:#b3b2b3;"></div>
<div class="r" style="left:1749px;top:495px;width:2px;height:48px;background:#b3b2b3;"></div>
<div class="r" style="left:1968px;top:495px;width:2px;height:48px;background:#b3b2b3;"></div>
<div class="r" style="left:2186px;top:495px;width:2px;height:48px;background:#b3b2b3;"></div>
<div class="r" style="left:2389px;top:495px;width:2px;height:48px;background:#b3b2b3;"></div>
<div class="r" style="left:2623px;top:495px;width:2px;height:48px;background:#b3b2b3;"></div>
<div class="r" style="left:264px;top:499px;width:40px;height:40px;box-sizing:border-box;border:2px solid #e4e4e4;border-radius:2px;"></div>
<div class="t" style="left:324.5px;top:506.4px;font-size:26.5px;line-height:26.5px;color:#262626;font-weight:400;">3. Гонорары актеров</div>
<div class="t" style="left:747.4px;width:1200px;text-align:right;top:507.2px;font-size:25.5px;line-height:25.5px;color:#262626;font-weight:400;">16 880 000,00</div>
<div class="t" style="left:965.6px;width:1200px;text-align:right;top:507.2px;font-size:25.5px;line-height:25.5px;color:#262626;font-weight:400;">3 944 000,00</div>
<div class="t" style="left:1168.2px;width:1200px;text-align:right;top:507.2px;font-size:25.5px;line-height:25.5px;color:#262626;font-weight:400;">2 124 496,80</div>
<div class="t" style="left:1402.0px;width:1200px;text-align:right;top:507.2px;font-size:25.5px;line-height:25.5px;color:#262626;font-weight:400;">12 936 000,00</div>
<div class="t" style="left:1578.0px;width:1200px;text-align:right;top:507.2px;font-size:25.5px;line-height:25.5px;color:#262626;font-weight:400;">14 755</div>
<div class="r" style="left:210px;top:545px;width:902px;height:48px;background:#cdcdcd;"></div>
<div class="r" style="left:1122px;top:545px;width:1658px;height:48px;background:#cdcdcd;"></div>
<div class="r" style="left:1749px;top:545px;width:219px;height:48px;background:#a7c2a3;"></div>
<div class="r" style="left:210px;top:593px;width:902px;height:2px;background:#b3b2b3;"></div>
<div class="r" style="left:1122px;top:593px;width:1658px;height:2px;background:#b3b2b3;"></div>
<div class="r" style="left:1046px;top:545px;width:2px;height:48px;background:#b3b2b3;"></div>
<div class="r" style="left:1311px;top:545px;width:2px;height:48px;background:#b3b2b3;"></div>
<div class="r" style="left:1457px;top:545px;width:2px;height:48px;background:#b3b2b3;"></div>
<div class="r" style="left:1603px;top:545px;width:2px;height:48px;background:#b3b2b3;"></div>
<div class="r" style="left:1749px;top:545px;width:2px;height:48px;background:#b3b2b3;"></div>
<div class="r" style="left:1968px;top:545px;width:2px;height:48px;background:#b3b2b3;"></div>
<div class="r" style="left:2186px;top:545px;width:2px;height:48px;background:#b3b2b3;"></div>
<div class="r" style="left:2389px;top:545px;width:2px;height:48px;background:#b3b2b3;"></div>
<div class="r" style="left:2623px;top:545px;width:2px;height:48px;background:#b3b2b3;"></div>
<div class="r" style="left:264px;top:549px;width:40px;height:40px;box-sizing:border-box;border:2px solid #e4e4e4;border-radius:2px;"></div>
<div class="t" style="left:324.5px;top:556.4px;font-size:26.5px;line-height:26.5px;color:#262626;font-weight:400;">4. Материалы</div>
<div class="t" style="left:747.4px;width:1200px;text-align:right;top:557.2px;font-size:25.5px;line-height:25.5px;color:#262626;font-weight:400;">390 500,00</div>
<div class="t" style="left:965.6px;width:1200px;text-align:right;top:557.2px;font-size:25.5px;line-height:25.5px;color:#262626;font-weight:400;">54 377,00</div>
<div class="t" style="left:1168.2px;width:1200px;text-align:right;top:557.2px;font-size:25.5px;line-height:25.5px;color:#262626;font-weight:400;">54 157,00</div>
<div class="t" style="left:1402.0px;width:1200px;text-align:right;top:557.2px;font-size:25.5px;line-height:25.5px;color:#262626;font-weight:400;">336 123,00</div>
<div class="t" style="left:1578.0px;width:1200px;text-align:right;top:557.2px;font-size:25.5px;line-height:25.5px;color:#262626;font-weight:400;">336</div>
<div class="r" style="left:210px;top:595px;width:902px;height:48px;background:#cdcdcd;"></div>
<div class="r" style="left:1122px;top:595px;width:1658px;height:48px;background:#cdcdcd;"></div>
<div class="r" style="left:1749px;top:595px;width:219px;height:48px;background:#a7c2a3;"></div>
<div class="r" style="left:210px;top:643px;width:902px;height:2px;background:#b3b2b3;"></div>
<div class="r" style="left:1122px;top:643px;width:1658px;height:2px;background:#b3b2b3;"></div>
<div class="r" style="left:1046px;top:595px;width:2px;height:48px;background:#b3b2b3;"></div>
<div class="r" style="left:1311px;top:595px;width:2px;height:48px;background:#b3b2b3;"></div>
<div class="r" style="left:1457px;top:595px;width:2px;height:48px;background:#b3b2b3;"></div>
<div class="r" style="left:1603px;top:595px;width:2px;height:48px;background:#b3b2b3;"></div>
<div class="r" style="left:1749px;top:595px;width:2px;height:48px;background:#b3b2b3;"></div>
<div class="r" style="left:1968px;top:595px;width:2px;height:48px;background:#b3b2b3;"></div>
<div class="r" style="left:2186px;top:595px;width:2px;height:48px;background:#b3b2b3;"></div>
<div class="r" style="left:2389px;top:595px;width:2px;height:48px;background:#b3b2b3;"></div>
<div class="r" style="left:2623px;top:595px;width:2px;height:48px;background:#b3b2b3;"></div>
<div class="r" style="left:264px;top:599px;width:40px;height:40px;box-sizing:border-box;border:2px solid #e4e4e4;border-radius:2px;"></div>
<div class="t" style="left:324.5px;top:606.4px;font-size:26.5px;line-height:26.5px;color:#262626;font-weight:400;">5. Декорационно-техническое оформление проекта</div>
<div class="t" style="left:747.4px;width:1200px;text-align:right;top:607.2px;font-size:25.5px;line-height:25.5px;color:#262626;font-weight:400;">6 350 000,00</div>
<div class="t" style="left:965.6px;width:1200px;text-align:right;top:607.2px;font-size:25.5px;line-height:25.5px;color:#262626;font-weight:400;">974 708,40</div>
<div class="t" style="left:1168.2px;width:1200px;text-align:right;top:607.2px;font-size:25.5px;line-height:25.5px;color:#262626;font-weight:400;">559 976,40</div>
<div class="t" style="left:1402.0px;width:1200px;text-align:right;top:607.2px;font-size:25.5px;line-height:25.5px;color:#262626;font-weight:400;">5 375 291,60</div>
<div class="t" style="left:1578.0px;width:1200px;text-align:right;top:607.2px;font-size:25.5px;line-height:25.5px;color:#262626;font-weight:400;">5 790</div>
<div class="r" style="left:210px;top:645px;width:902px;height:48px;background:#cdcdcd;"></div>
<div class="r" style="left:1122px;top:645px;width:1658px;height:48px;background:#cdcdcd;"></div>
<div class="r" style="left:1749px;top:645px;width:219px;height:48px;background:#a7c2a3;"></div>
<div class="r" style="left:210px;top:693px;width:902px;height:2px;background:#b3b2b3;"></div>
<div class="r" style="left:1122px;top:693px;width:1658px;height:2px;background:#b3b2b3;"></div>
<div class="r" style="left:1046px;top:645px;width:2px;height:48px;background:#b3b2b3;"></div>
<div class="r" style="left:1311px;top:645px;width:2px;height:48px;background:#b3b2b3;"></div>
<div class="r" style="left:1457px;top:645px;width:2px;height:48px;background:#b3b2b3;"></div>
<div class="r" style="left:1603px;top:645px;width:2px;height:48px;background:#b3b2b3;"></div>
<div class="r" style="left:1749px;top:645px;width:2px;height:48px;background:#b3b2b3;"></div>
<div class="r" style="left:1968px;top:645px;width:2px;height:48px;background:#b3b2b3;"></div>
<div class="r" style="left:2186px;top:645px;width:2px;height:48px;background:#b3b2b3;"></div>
<div class="r" style="left:2389px;top:645px;width:2px;height:48px;background:#b3b2b3;"></div>
<div class="r" style="left:2623px;top:645px;width:2px;height:48px;background:#b3b2b3;"></div>
<div class="r" style="left:264px;top:649px;width:40px;height:40px;box-sizing:border-box;border:2px solid #e4e4e4;border-radius:2px;"></div>
<div class="t" style="left:324.5px;top:656.4px;font-size:26.5px;line-height:26.5px;color:#262626;font-weight:400;">6. Художественно-постановочные расходы</div>
<div class="t" style="left:747.4px;width:1200px;text-align:right;top:657.2px;font-size:25.5px;line-height:25.5px;color:#262626;font-weight:400;">2 522 000,00</div>
<div class="t" style="left:965.6px;width:1200px;text-align:right;top:657.2px;font-size:25.5px;line-height:25.5px;color:#262626;font-weight:400;">1 804 650,00</div>
<div class="t" style="left:1168.2px;width:1200px;text-align:right;top:657.2px;font-size:25.5px;line-height:25.5px;color:#262626;font-weight:400;">1 356 040,00</div>
<div class="t" style="left:1402.0px;width:1200px;text-align:right;top:657.2px;font-size:25.5px;line-height:25.5px;color:#262626;font-weight:400;">717 350,00</div>
<div class="t" style="left:1578.0px;width:1200px;text-align:right;top:657.2px;font-size:25.5px;line-height:25.5px;color:#262626;font-weight:400;">1 165</div>
<div class="r" style="left:210px;top:695px;width:902px;height:48px;background:#cdcdcd;"></div>
<div class="r" style="left:1122px;top:695px;width:1658px;height:48px;background:#cdcdcd;"></div>
<div class="r" style="left:1749px;top:695px;width:219px;height:48px;background:#a7c2a3;"></div>
<div class="r" style="left:210px;top:743px;width:902px;height:2px;background:#b3b2b3;"></div>
<div class="r" style="left:1122px;top:743px;width:1658px;height:2px;background:#b3b2b3;"></div>
<div class="r" style="left:1046px;top:695px;width:2px;height:48px;background:#b3b2b3;"></div>
<div class="r" style="left:1311px;top:695px;width:2px;height:48px;background:#b3b2b3;"></div>
<div class="r" style="left:1457px;top:695px;width:2px;height:48px;background:#b3b2b3;"></div>
<div class="r" style="left:1603px;top:695px;width:2px;height:48px;background:#b3b2b3;"></div>
<div class="r" style="left:1749px;top:695px;width:2px;height:48px;background:#b3b2b3;"></div>
<div class="r" style="left:1968px;top:695px;width:2px;height:48px;background:#b3b2b3;"></div>
<div class="r" style="left:2186px;top:695px;width:2px;height:48px;background:#b3b2b3;"></div>
<div class="r" style="left:2389px;top:695px;width:2px;height:48px;background:#b3b2b3;"></div>
<div class="r" style="left:2623px;top:695px;width:2px;height:48px;background:#b3b2b3;"></div>
<div class="r" style="left:264px;top:699px;width:40px;height:40px;box-sizing:border-box;border:2px solid #e4e4e4;border-radius:2px;"></div>
<div class="t" style="left:324.5px;top:706.4px;font-size:26.5px;line-height:26.5px;color:#262626;font-weight:400;">7. Технические услуги съемочного периода</div>
<div class="t" style="left:747.4px;width:1200px;text-align:right;top:707.2px;font-size:25.5px;line-height:25.5px;color:#262626;font-weight:400;">4 213 000,00</div>
<div class="t" style="left:965.6px;width:1200px;text-align:right;top:707.2px;font-size:25.5px;line-height:25.5px;color:#262626;font-weight:400;">464 870,58</div>
<div class="t" style="left:1168.2px;width:1200px;text-align:right;top:707.2px;font-size:25.5px;line-height:25.5px;color:#262626;font-weight:400;">222 400,00</div>
<div class="t" style="left:1402.0px;width:1200px;text-align:right;top:707.2px;font-size:25.5px;line-height:25.5px;color:#262626;font-weight:400;">3 748 129,42</div>
<div class="t" style="left:1578.0px;width:1200px;text-align:right;top:707.2px;font-size:25.5px;line-height:25.5px;color:#262626;font-weight:400;">3 990</div>
<div class="r" style="left:210px;top:745px;width:902px;height:48px;background:#cdcdcd;"></div>
<div class="r" style="left:1122px;top:745px;width:1658px;height:48px;background:#cdcdcd;"></div>
<div class="r" style="left:1749px;top:745px;width:219px;height:48px;background:#a7c2a3;"></div>
<div class="r" style="left:210px;top:793px;width:902px;height:2px;background:#b3b2b3;"></div>
<div class="r" style="left:1122px;top:793px;width:1658px;height:2px;background:#b3b2b3;"></div>
<div class="r" style="left:1046px;top:745px;width:2px;height:48px;background:#b3b2b3;"></div>
<div class="r" style="left:1311px;top:745px;width:2px;height:48px;background:#b3b2b3;"></div>
<div class="r" style="left:1457px;top:745px;width:2px;height:48px;background:#b3b2b3;"></div>
<div class="r" style="left:1603px;top:745px;width:2px;height:48px;background:#b3b2b3;"></div>
<div class="r" style="left:1749px;top:745px;width:2px;height:48px;background:#b3b2b3;"></div>
<div class="r" style="left:1968px;top:745px;width:2px;height:48px;background:#b3b2b3;"></div>
<div class="r" style="left:2186px;top:745px;width:2px;height:48px;background:#b3b2b3;"></div>
<div class="r" style="left:2389px;top:745px;width:2px;height:48px;background:#b3b2b3;"></div>
<div class="r" style="left:2623px;top:745px;width:2px;height:48px;background:#b3b2b3;"></div>
<div class="r" style="left:264px;top:749px;width:40px;height:40px;box-sizing:border-box;border:2px solid #e4e4e4;border-radius:2px;"></div>
<div class="t" style="left:324.5px;top:756.4px;font-size:26.5px;line-height:26.5px;color:#262626;font-weight:400;">8. Услуги специализированных организаций</div>
<div class="t" style="left:747.4px;width:1200px;text-align:right;top:757.2px;font-size:25.5px;line-height:25.5px;color:#262626;font-weight:400;">6 275 000,00</div>
<div class="t" style="left:965.6px;width:1200px;text-align:right;top:757.2px;font-size:25.5px;line-height:25.5px;color:#262626;font-weight:400;">1 307 110,00</div>
<div class="t" style="left:1168.2px;width:1200px;text-align:right;top:757.2px;font-size:25.5px;line-height:25.5px;color:#262626;font-weight:400;">802 500,00</div>
<div class="t" style="left:1402.0px;width:1200px;text-align:right;top:757.2px;font-size:25.5px;line-height:25.5px;color:#262626;font-weight:400;">4 967 890,00</div>
<div class="t" style="left:1578.0px;width:1200px;text-align:right;top:757.2px;font-size:25.5px;line-height:25.5px;color:#262626;font-weight:400;">5 472</div>
<div class="r" style="left:210px;top:795px;width:902px;height:48px;background:#cdcdcd;"></div>
<div class="r" style="left:1122px;top:795px;width:1658px;height:48px;background:#cdcdcd;"></div>
<div class="r" style="left:1749px;top:795px;width:219px;height:48px;background:#a7c2a3;"></div>
<div class="r" style="left:210px;top:843px;width:902px;height:2px;background:#b3b2b3;"></div>
<div class="r" style="left:1122px;top:843px;width:1658px;height:2px;background:#b3b2b3;"></div>
<div class="r" style="left:1046px;top:795px;width:2px;height:48px;background:#b3b2b3;"></div>
<div class="r" style="left:1311px;top:795px;width:2px;height:48px;background:#b3b2b3;"></div>
<div class="r" style="left:1457px;top:795px;width:2px;height:48px;background:#b3b2b3;"></div>
<div class="r" style="left:1603px;top:795px;width:2px;height:48px;background:#b3b2b3;"></div>
<div class="r" style="left:1749px;top:795px;width:2px;height:48px;background:#b3b2b3;"></div>
<div class="r" style="left:1968px;top:795px;width:2px;height:48px;background:#b3b2b3;"></div>
<div class="r" style="left:2186px;top:795px;width:2px;height:48px;background:#b3b2b3;"></div>
<div class="r" style="left:2389px;top:795px;width:2px;height:48px;background:#b3b2b3;"></div>
<div class="r" style="left:2623px;top:795px;width:2px;height:48px;background:#b3b2b3;"></div>
<div class="r" style="left:264px;top:799px;width:40px;height:40px;box-sizing:border-box;border:2px solid #e4e4e4;border-radius:2px;"></div>
<div class="t" style="left:324.5px;top:806.4px;font-size:26.5px;line-height:26.5px;color:#262626;font-weight:400;">9. Технические услуги МТП</div>
<div class="t" style="left:747.4px;width:1200px;text-align:right;top:807.2px;font-size:25.5px;line-height:25.5px;color:#262626;font-weight:400;">100 000,00</div>
<div class="t" style="left:965.6px;width:1200px;text-align:right;top:807.2px;font-size:25.5px;line-height:25.5px;color:#262626;font-weight:400;">25 373,60</div>
<div class="t" style="left:1168.2px;width:1200px;text-align:right;top:807.2px;font-size:25.5px;line-height:25.5px;color:#262626;font-weight:400;">25 373,60</div>
<div class="t" style="left:1402.0px;width:1200px;text-align:right;top:807.2px;font-size:25.5px;line-height:25.5px;color:#262626;font-weight:400;">74 626,40</div>
<div class="t" style="left:1578.0px;width:1200px;text-align:right;top:807.2px;font-size:25.5px;line-height:25.5px;color:#262626;font-weight:400;">74</div>
<div class="r" style="left:210px;top:845px;width:902px;height:48px;background:#cdcdcd;"></div>
<div class="r" style="left:1122px;top:845px;width:1658px;height:48px;background:#cdcdcd;"></div>
<div class="r" style="left:1749px;top:845px;width:219px;height:48px;background:#a7c2a3;"></div>
<div class="r" style="left:210px;top:893px;width:902px;height:2px;background:#b3b2b3;"></div>
<div class="r" style="left:1122px;top:893px;width:1658px;height:2px;background:#b3b2b3;"></div>
<div class="r" style="left:1046px;top:845px;width:2px;height:48px;background:#b3b2b3;"></div>
<div class="r" style="left:1311px;top:845px;width:2px;height:48px;background:#b3b2b3;"></div>
<div class="r" style="left:1457px;top:845px;width:2px;height:48px;background:#b3b2b3;"></div>
<div class="r" style="left:1603px;top:845px;width:2px;height:48px;background:#b3b2b3;"></div>
<div class="r" style="left:1749px;top:845px;width:2px;height:48px;background:#b3b2b3;"></div>
<div class="r" style="left:1968px;top:845px;width:2px;height:48px;background:#b3b2b3;"></div>
<div class="r" style="left:2186px;top:845px;width:2px;height:48px;background:#b3b2b3;"></div>
<div class="r" style="left:2389px;top:845px;width:2px;height:48px;background:#b3b2b3;"></div>
<div class="r" style="left:2623px;top:845px;width:2px;height:48px;background:#b3b2b3;"></div>
<div class="r" style="left:264px;top:849px;width:40px;height:40px;box-sizing:border-box;border:2px solid #e4e4e4;border-radius:2px;"></div>
<div class="t" style="left:324.5px;top:856.4px;font-size:26.5px;line-height:26.5px;color:#262626;font-weight:400;">10. Прочие расходы</div>
<div class="t" style="left:747.4px;width:1200px;text-align:right;top:857.2px;font-size:25.5px;line-height:25.5px;color:#262626;font-weight:400;">1 205 000,00</div>
<div class="t" style="left:965.6px;width:1200px;text-align:right;top:857.2px;font-size:25.5px;line-height:25.5px;color:#262626;font-weight:400;">245 738,00</div>
<div class="t" style="left:1168.2px;width:1200px;text-align:right;top:857.2px;font-size:25.5px;line-height:25.5px;color:#262626;font-weight:400;">330 668,00</div>
<div class="t" style="left:1402.0px;width:1200px;text-align:right;top:857.2px;font-size:25.5px;line-height:25.5px;color:#262626;font-weight:400;">959 262,00</div>
<div class="t" style="left:1578.0px;width:1200px;text-align:right;top:857.2px;font-size:25.5px;line-height:25.5px;color:#262626;font-weight:400;">874</div>
<div class="r" style="left:210px;top:895px;width:902px;height:48px;background:#cdcdcd;"></div>
<div class="r" style="left:1122px;top:895px;width:1658px;height:48px;background:#cdcdcd;"></div>
<div class="r" style="left:1749px;top:895px;width:219px;height:48px;background:#a7c2a3;"></div>
<div class="r" style="left:210px;top:943px;width:902px;height:2px;background:#b3b2b3;"></div>
<div class="r" style="left:1122px;top:943px;width:1658px;height:2px;background:#b3b2b3;"></div>
<div class="r" style="left:1046px;top:895px;width:2px;height:48px;background:#b3b2b3;"></div>
<div class="r" style="left:1311px;top:895px;width:2px;height:48px;background:#b3b2b3;"></div>
<div class="r" style="left:1457px;top:895px;width:2px;height:48px;background:#b3b2b3;"></div>
<div class="r" style="left:1603px;top:895px;width:2px;height:48px;background:#b3b2b3;"></div>
<div class="r" style="left:1749px;top:895px;width:2px;height:48px;background:#b3b2b3;"></div>
<div class="r" style="left:1968px;top:895px;width:2px;height:48px;background:#b3b2b3;"></div>
<div class="r" style="left:2186px;top:895px;width:2px;height:48px;background:#b3b2b3;"></div>
<div class="r" style="left:2389px;top:895px;width:2px;height:48px;background:#b3b2b3;"></div>
<div class="r" style="left:2623px;top:895px;width:2px;height:48px;background:#b3b2b3;"></div>
<div class="r" style="left:264px;top:899px;width:40px;height:40px;box-sizing:border-box;border:2px solid #e4e4e4;border-radius:2px;"></div>
<div class="t" style="left:324.5px;top:906.4px;font-size:26.5px;line-height:26.5px;color:#262626;font-weight:400;">11. Непредвиденные расходы</div>
<div class="t" style="left:747.4px;width:1200px;text-align:right;top:907.2px;font-size:25.5px;line-height:25.5px;color:#262626;font-weight:400;">3 883 146,07</div>
<div class="t" style="left:965.6px;width:1200px;text-align:right;top:907.2px;font-size:25.5px;line-height:25.5px;color:#262626;font-weight:400;">1 054 393,30</div>
<div class="t" style="left:1168.2px;width:1200px;text-align:right;top:907.2px;font-size:25.5px;line-height:25.5px;color:#262626;font-weight:400;">777 453,29</div>
<div class="t" style="left:1402.0px;width:1200px;text-align:right;top:907.2px;font-size:25.5px;line-height:25.5px;color:#262626;font-weight:400;">2 828 752,77</div>
<div class="t" style="left:1578.0px;width:1200px;text-align:right;top:907.2px;font-size:25.5px;line-height:25.5px;color:#262626;font-weight:400;">3 105</div>
<div class="r" style="left:210px;top:945px;width:902px;height:48px;background:#cdcdcd;"></div>
<div class="r" style="left:1122px;top:945px;width:1658px;height:48px;background:#cdcdcd;"></div>
<div class="r" style="left:1749px;top:945px;width:219px;height:48px;background:#a7c2a3;"></div>
<div class="r" style="left:210px;top:993px;width:902px;height:2px;background:#808080;"></div>
<div class="r" style="left:1122px;top:993px;width:1658px;height:2px;background:#808080;"></div>
<div class="r" style="left:1046px;top:945px;width:2px;height:48px;background:#b3b2b3;"></div>
<div class="r" style="left:1311px;top:945px;width:2px;height:48px;background:#b3b2b3;"></div>
<div class="r" style="left:1457px;top:945px;width:2px;height:48px;background:#b3b2b3;"></div>
<div class="r" style="left:1603px;top:945px;width:2px;height:48px;background:#b3b2b3;"></div>
<div class="r" style="left:1749px;top:945px;width:2px;height:48px;background:#b3b2b3;"></div>
<div class="r" style="left:1968px;top:945px;width:2px;height:48px;background:#b3b2b3;"></div>
<div class="r" style="left:2186px;top:945px;width:2px;height:48px;background:#b3b2b3;"></div>
<div class="r" style="left:2389px;top:945px;width:2px;height:48px;background:#b3b2b3;"></div>
<div class="r" style="left:2623px;top:945px;width:2px;height:48px;background:#b3b2b3;"></div>
<div class="r" style="left:264px;top:949px;width:40px;height:40px;box-sizing:border-box;border:2px solid #e4e4e4;border-radius:2px;"></div>
<div class="t" style="left:324.5px;top:956.4px;font-size:26.5px;line-height:26.5px;color:#262626;font-weight:400;">12. Прочее</div>
<div class="t" style="left:1168.2px;width:1200px;text-align:right;top:957.2px;font-size:25.5px;line-height:25.5px;color:#262626;font-weight:400;">-81 031,00</div>
<div class="t" style="left:1578.0px;width:1200px;text-align:right;top:957.2px;font-size:25.5px;line-height:25.5px;color:#262626;font-weight:400;">81</div>
<div class="r" style="left:210px;top:995px;width:902px;height:48px;background:#3c3c3c;"></div>
<div class="r" style="left:1122px;top:995px;width:1658px;height:48px;background:#3c3c3c;"></div>
<div class="r" style="left:1749px;top:995px;width:219px;height:48px;background:#152b13;"></div>
<div class="r" style="left:210px;top:1043px;width:902px;height:2px;background:#808080;"></div>
<div class="r" style="left:1122px;top:1043px;width:1658px;height:2px;background:#808080;"></div>
<div class="r" style="left:1046px;top:995px;width:2px;height:48px;background:#8a8a8a;"></div>
<div class="r" style="left:1311px;top:995px;width:2px;height:48px;background:#8a8a8a;"></div>
<div class="r" style="left:1457px;top:995px;width:2px;height:48px;background:#8a8a8a;"></div>
<div class="r" style="left:1603px;top:995px;width:2px;height:48px;background:#8a8a8a;"></div>
<div class="r" style="left:1749px;top:995px;width:2px;height:48px;background:#8a8a8a;"></div>
<div class="r" style="left:1968px;top:995px;width:2px;height:48px;background:#8a8a8a;"></div>
<div class="r" style="left:2186px;top:995px;width:2px;height:48px;background:#8a8a8a;"></div>
<div class="r" style="left:2389px;top:995px;width:2px;height:48px;background:#8a8a8a;"></div>
<div class="r" style="left:2623px;top:995px;width:2px;height:48px;background:#8a8a8a;"></div>
<div class="t" style="left:747.4px;width:1200px;text-align:right;top:1002.7px;font-size:29.9px;line-height:29.9px;color:#fff;font-weight:400;transform:scaleX(0.916);transform-origin:100% 50%;-webkit-text-stroke-width:1px;">57 445 226,72</div>
<div class="t" style="left:965.6px;width:1200px;text-align:right;top:1002.7px;font-size:29.9px;line-height:29.9px;color:#fff;font-weight:400;transform:scaleX(0.916);transform-origin:100% 50%;-webkit-text-stroke-width:1px;">16 704 572,35</div>
<div class="t" style="left:1168.2px;width:1200px;text-align:right;top:1002.7px;font-size:29.9px;line-height:29.9px;color:#fff;font-weight:400;transform:scaleX(0.916);transform-origin:100% 50%;-webkit-text-stroke-width:1px;">9 113 773,12</div>
<div class="t" style="left:1402.0px;width:1200px;text-align:right;top:1002.7px;font-size:29.9px;line-height:29.9px;color:#fff;font-weight:400;transform:scaleX(0.916);transform-origin:100% 50%;-webkit-text-stroke-width:1px;">40 740 654,37</div>
<div class="t" style="left:1572.0px;width:1200px;text-align:right;top:1002.7px;font-size:29.9px;line-height:29.9px;color:#fff;font-weight:400;transform:scaleX(0.916);transform-origin:100% 50%;-webkit-text-stroke-width:1px;">48 331</div>
<div class="r" style="left:210px;top:1045px;width:902px;height:48px;background:#cdcdcd;"></div>
<div class="r" style="left:1122px;top:1045px;width:1658px;height:48px;background:#cdcdcd;"></div>
<div class="r" style="left:1749px;top:1045px;width:219px;height:48px;background:#a7c2a3;"></div>
<div class="r" style="left:210px;top:1093px;width:902px;height:2px;background:#b3b2b3;"></div>
<div class="r" style="left:1122px;top:1093px;width:1658px;height:2px;background:#b3b2b3;"></div>
<div class="r" style="left:1046px;top:1045px;width:2px;height:48px;background:#b3b2b3;"></div>
<div class="r" style="left:1311px;top:1045px;width:2px;height:48px;background:#b3b2b3;"></div>
<div class="r" style="left:1457px;top:1045px;width:2px;height:48px;background:#b3b2b3;"></div>
<div class="r" style="left:1603px;top:1045px;width:2px;height:48px;background:#b3b2b3;"></div>
<div class="r" style="left:1749px;top:1045px;width:2px;height:48px;background:#b3b2b3;"></div>
<div class="r" style="left:1968px;top:1045px;width:2px;height:48px;background:#b3b2b3;"></div>
<div class="r" style="left:2186px;top:1045px;width:2px;height:48px;background:#b3b2b3;"></div>
<div class="r" style="left:2389px;top:1045px;width:2px;height:48px;background:#b3b2b3;"></div>
<div class="r" style="left:2623px;top:1045px;width:2px;height:48px;background:#b3b2b3;"></div>
<div class="t" style="left:-175.6px;width:1200px;text-align:right;top:1056.4px;font-size:26.5px;line-height:26.5px;color:#262626;font-weight:400;">Петров Н.Н. (ФЛ) / под отчет (5)</div>
<div class="t" style="left:90.5px;width:1200px;text-align:right;top:1057.2px;font-size:25.5px;line-height:25.5px;color:#333;font-weight:400;">1 000 000,00</div>
<div class="t" style="left:931.0px;width:1200px;text-align:center;top:1055.5px;font-size:27.5px;line-height:27.5px;color:#262626;font-weight:400;">аккорд</div>
<div class="t" style="left:747.4px;width:1200px;text-align:right;top:1057.2px;font-size:25.5px;line-height:25.5px;color:#262626;font-weight:400;">1 000 000,00</div>
<div class="t" style="left:965.6px;width:1200px;text-align:right;top:1057.2px;font-size:25.5px;line-height:25.5px;color:#262626;font-weight:400;">220 030,00</div>
<div class="t" style="left:1168.2px;width:1200px;text-align:right;top:1057.2px;font-size:25.5px;line-height:25.5px;color:#262626;font-weight:400;">400 850,00</div>
<div class="t" style="left:1402.0px;width:1200px;text-align:right;top:1057.2px;font-size:25.5px;line-height:25.5px;color:#262626;font-weight:400;">779 970,00</div>
<div class="t" style="left:1578.0px;width:1200px;text-align:right;top:1057.2px;font-size:25.5px;line-height:25.5px;color:#262626;font-weight:400;">599</div>
<div class="r" style="left:210px;top:1095px;width:902px;height:48px;background:#cdcdcd;"></div>
<div class="r" style="left:1122px;top:1095px;width:1658px;height:48px;background:#cdcdcd;"></div>
<div class="r" style="left:1749px;top:1095px;width:219px;height:48px;background:#a7c2a3;"></div>
<div class="r" style="left:210px;top:1143px;width:902px;height:2px;background:#808080;"></div>
<div class="r" style="left:1122px;top:1143px;width:1658px;height:2px;background:#808080;"></div>
<div class="r" style="left:1046px;top:1095px;width:2px;height:48px;background:#b3b2b3;"></div>
<div class="r" style="left:1311px;top:1095px;width:2px;height:48px;background:#b3b2b3;"></div>
<div class="r" style="left:1457px;top:1095px;width:2px;height:48px;background:#b3b2b3;"></div>
<div class="r" style="left:1603px;top:1095px;width:2px;height:48px;background:#b3b2b3;"></div>
<div class="r" style="left:1749px;top:1095px;width:2px;height:48px;background:#b3b2b3;"></div>
<div class="r" style="left:1968px;top:1095px;width:2px;height:48px;background:#b3b2b3;"></div>
<div class="r" style="left:2186px;top:1095px;width:2px;height:48px;background:#b3b2b3;"></div>
<div class="r" style="left:2389px;top:1095px;width:2px;height:48px;background:#b3b2b3;"></div>
<div class="r" style="left:2623px;top:1095px;width:2px;height:48px;background:#b3b2b3;"></div>
<div class="t" style="left:90.5px;width:1200px;text-align:right;top:1107.2px;font-size:25.5px;line-height:25.5px;color:#333;font-weight:400;">1 000 000,00</div>
<div class="t" style="left:931.0px;width:1200px;text-align:center;top:1105.5px;font-size:27.5px;line-height:27.5px;color:#262626;font-weight:400;">аккорд</div>
<div class="t" style="left:747.4px;width:1200px;text-align:right;top:1107.2px;font-size:25.5px;line-height:25.5px;color:#262626;font-weight:400;">1 000 000,00</div>
<div class="t" style="left:965.6px;width:1200px;text-align:right;top:1107.2px;font-size:25.5px;line-height:25.5px;color:#262626;font-weight:400;">160 000,00</div>
<div class="t" style="left:1168.2px;width:1200px;text-align:right;top:1107.2px;font-size:25.5px;line-height:25.5px;color:#262626;font-weight:400;">150 000,00</div>
<div class="t" style="left:1402.0px;width:1200px;text-align:right;top:1107.2px;font-size:25.5px;line-height:25.5px;color:#262626;font-weight:400;">840 000,00</div>
<div class="t" style="left:1578.0px;width:1200px;text-align:right;top:1107.2px;font-size:25.5px;line-height:25.5px;color:#262626;font-weight:400;">850</div>
<div class="r" style="left:210px;top:1145px;width:902px;height:48px;background:#3c3c3c;"></div>
<div class="r" style="left:1122px;top:1145px;width:1658px;height:48px;background:#3c3c3c;"></div>
<div class="r" style="left:1749px;top:1145px;width:219px;height:48px;background:#152b13;"></div>
<div class="r" style="left:1046px;top:1145px;width:2px;height:48px;background:#8a8a8a;"></div>
<div class="r" style="left:1311px;top:1145px;width:2px;height:48px;background:#8a8a8a;"></div>
<div class="r" style="left:1457px;top:1145px;width:2px;height:48px;background:#8a8a8a;"></div>
<div class="r" style="left:1603px;top:1145px;width:2px;height:48px;background:#8a8a8a;"></div>
<div class="r" style="left:1749px;top:1145px;width:2px;height:48px;background:#8a8a8a;"></div>
<div class="r" style="left:1968px;top:1145px;width:2px;height:48px;background:#8a8a8a;"></div>
<div class="r" style="left:2186px;top:1145px;width:2px;height:48px;background:#8a8a8a;"></div>
<div class="r" style="left:2389px;top:1145px;width:2px;height:48px;background:#8a8a8a;"></div>
<div class="r" style="left:2623px;top:1145px;width:2px;height:48px;background:#8a8a8a;"></div>
<div class="t" style="left:747.4px;width:1200px;text-align:right;top:1152.7px;font-size:29.9px;line-height:29.9px;color:#fff;font-weight:400;transform:scaleX(0.916);transform-origin:100% 50%;-webkit-text-stroke-width:1px;">59 445 226,72</div>
<div class="t" style="left:965.6px;width:1200px;text-align:right;top:1152.7px;font-size:29.9px;line-height:29.9px;color:#fff;font-weight:400;transform:scaleX(0.916);transform-origin:100% 50%;-webkit-text-stroke-width:1px;">17 084 602,35</div>
<div class="t" style="left:1168.2px;width:1200px;text-align:right;top:1152.7px;font-size:29.9px;line-height:29.9px;color:#fff;font-weight:400;transform:scaleX(0.916);transform-origin:100% 50%;-webkit-text-stroke-width:1px;">9 664 623,12</div>
<div class="t" style="left:1402.0px;width:1200px;text-align:right;top:1152.7px;font-size:29.9px;line-height:29.9px;color:#fff;font-weight:400;transform:scaleX(0.916);transform-origin:100% 50%;-webkit-text-stroke-width:1px;">42 360 624,37</div>
<div class="t" style="left:1572.0px;width:1200px;text-align:right;top:1152.7px;font-size:29.9px;line-height:29.9px;color:#fff;font-weight:400;transform:scaleX(0.916);transform-origin:100% 50%;-webkit-text-stroke-width:1px;">49 780</div>
<svg style="left:224px;top:710px;" width="25" height="18" viewBox="0 0 25 18"><rect x="0" y="1" width="16" height="16" rx="2.5" fill="#333"/><path d="M15,7 L25,1 L25,17 L15,11 Z" fill="#333"/></svg>
<div class="r" style="left:1122px;top:1193px;width:1658px;height:2px;background:#eeeeee;"></div>
<div class="r" style="left:1122px;top:1195px;width:1658px;height:26px;background:#f8f8f8;"></div>
<div class="r" style="left:1122px;top:1221px;width:1658px;height:2px;background:#ececec;"></div>
<div class="r" style="left:1128px;top:1201px;width:1159px;height:16px;background:#c1c1c1;border-radius:8px;"></div>
<div class="r" style="left:140px;top:874px;width:612px;height:612px;background:#fff;box-shadow:0 12px 24px rgba(0,0,0,0.2);"></div>
<div class="r" style="left:140px;top:874px;width:1px;height:612px;background:#e6e6e6;"></div>
<div class="r" style="left:142px;top:936px;width:608px;height:2px;background:#cccccc;"></div>
<div class="r" style="left:142px;top:1240px;width:608px;height:2px;background:#cccccc;"></div>
<div class="r" style="left:142px;top:1362px;width:608px;height:2px;background:#cccccc;"></div>
<div class="r" style="left:142px;top:1058px;width:608px;height:2px;background:#eeeeee;"></div>
<div class="r" style="left:142px;top:998px;width:608px;height:60px;background:#29873b;"></div>
<svg style="left:171.5px;top:897.9000000000001px;" width="9" height="15.5" viewBox="0 0 9 15.5"><polygon points="0,0 9,7.75 0,15.5" fill="#0a801e"/></svg>
<div class="t" style="left:192.3px;top:890.4px;font-size:26.3px;line-height:26.3px;color:#0a801e;font-weight:400;">Сводный отчет по проекту</div>
<svg style="left:171.5px;top:960.0px;" width="9" height="15.5" viewBox="0 0 9 15.5"><polygon points="0,0 9,7.75 0,15.5" fill="#0a801e"/></svg>
<div class="t" style="left:192.3px;top:952.5px;font-size:26.3px;line-height:26.3px;color:#0a801e;font-weight:400;">Отчет по задолженностям</div>
<svg style="left:171.5px;top:1019.8px;" width="9" height="15.5" viewBox="0 0 9 15.5"><polygon points="0,0 9,7.75 0,15.5" fill="#fff"/></svg>
<div class="t" style="left:192.3px;top:1012.3px;font-size:26.3px;line-height:26.3px;color:#fff;font-weight:400;">Акт сверки взаиморасчетов</div>
<svg style="left:171.5px;top:1082.2px;" width="9" height="15.5" viewBox="0 0 9 15.5"><polygon points="0,0 9,7.75 0,15.5" fill="#0a801e"/></svg>
<div class="t" style="left:192.3px;top:1074.7px;font-size:26.3px;line-height:26.3px;color:#0a801e;font-weight:400;">Начислено-оплачено (по месяцам)</div>
<svg style="left:171.5px;top:1142.2px;" width="9" height="15.5" viewBox="0 0 9 15.5"><polygon points="0,0 9,7.75 0,15.5" fill="#0a801e"/></svg>
<div class="t" style="left:192.3px;top:1134.7px;font-size:26.3px;line-height:26.3px;color:#0a801e;font-weight:400;">Начисленные расходы (по статьям / дням)</div>
<svg style="left:171.5px;top:1202.2px;" width="9" height="15.5" viewBox="0 0 9 15.5"><polygon points="0,0 9,7.75 0,15.5" fill="#0a801e"/></svg>
<div class="t" style="left:192.3px;top:1194.7px;font-size:26.3px;line-height:26.3px;color:#0a801e;font-weight:400;">Начисленные расходы (по типам / дням)</div>
<svg style="left:171.5px;top:1264.2px;" width="9" height="15.5" viewBox="0 0 9 15.5"><polygon points="0,0 9,7.75 0,15.5" fill="#0a801e"/></svg>
<div class="t" style="left:192.3px;top:1256.7px;font-size:26.3px;line-height:26.3px;color:#0a801e;font-weight:400;">Аналитика посменных расходов</div>
<svg style="left:171.5px;top:1324.2px;" width="9" height="15.5" viewBox="0 0 9 15.5"><polygon points="0,0 9,7.75 0,15.5" fill="#0a801e"/></svg>
<div class="t" style="left:192.3px;top:1316.7px;font-size:26.3px;line-height:26.3px;color:#0a801e;font-weight:400;">Аналитика помесячных расходов</div>
<svg style="left:171.5px;top:1385.2px;" width="9" height="15.5" viewBox="0 0 9 15.5"><polygon points="0,0 9,7.75 0,15.5" fill="#0a801e"/></svg>
<div class="t" style="left:192.3px;top:1377.7px;font-size:26.3px;line-height:26.3px;color:#0a801e;font-weight:400;">Отчет по платежам/договорам</div>
<svg style="left:171.5px;top:1445.2px;" width="9" height="15.5" viewBox="0 0 9 15.5"><polygon points="0,0 9,7.75 0,15.5" fill="#0a801e"/></svg>
<div class="t" style="left:192.3px;top:1437.7px;font-size:26.3px;line-height:26.3px;color:#0a801e;font-weight:400;">Отчет по финкомиссии</div>
<svg style="left:0;top:0" width="2846" height="1501" viewBox="0 0 2846 1501"><g fill="#e32222">
<polygon points="745.9,1027.1 773.8,990.1 828.1,990.1 800.5,1027.1 828.1,1064 773.8,1064"/>
<polygon points="814.7,1027.1 842.2,990.1 870.1,990.1 843.0,1027.1 870.1,1064 842.2,1064"/>
<polygon points="856.8,1027.1 884.3,990.1 898.1,990.1 871.0,1027.1 898.1,1064 884.3,1064"/>
</g></svg>
<svg style="left:0;top:0;filter:drop-shadow(0 1px 1px rgba(0,0,0,0.35))" width="2846" height="1501" viewBox="0 0 2846 1501"><g transform="translate(580,1000)">
<path d="M28.6,14.2 C30.3,14.2 31.8,15.3 32,17.5 L32.6,24.8 C33.2,22.9 34.6,22.3 35.8,22.6 C37,22.9 37.6,24 37.8,25.2 C38.4,23.7 39.8,23.2 41,23.6 C42.2,24 42.6,25.2 42.8,26.4 C43.6,25.1 45,24.7 46.2,25.2 C47.5,25.8 48.2,27 48.2,28.8 L48.2,35 C48.2,37.6 46.5,40.2 45.4,41.6 L44.8,44 C44.6,44.6 44,44.8 43.4,44.6 L40.6,43.2 C40.2,43 39.8,43 39.5,43.2 L37.6,44.4 C37.2,44.6 36.7,44.7 36.2,44.7 L33.5,44.7 C32.6,44.7 31.8,44.2 31.3,43.5 L22.3,32.2 C21.2,30.8 21.4,29 22.6,28.2 C23.8,27.3 25.6,27.7 26.7,28.9 L27.6,30 L25.9,17.7 C25.6,15.6 26.9,14.2 28.6,14.2 Z" fill="#fff" stroke="#000" stroke-width="1.5" stroke-linejoin="round"/>
<g stroke="#111" stroke-width="1.4"><line x1="35.2" y1="31.5" x2="35.2" y2="39"/><line x1="39" y1="31.5" x2="39" y2="39"/><line x1="42.8" y1="31.5" x2="42.8" y2="39"/></g>
</g></svg>
</div></body></html>
